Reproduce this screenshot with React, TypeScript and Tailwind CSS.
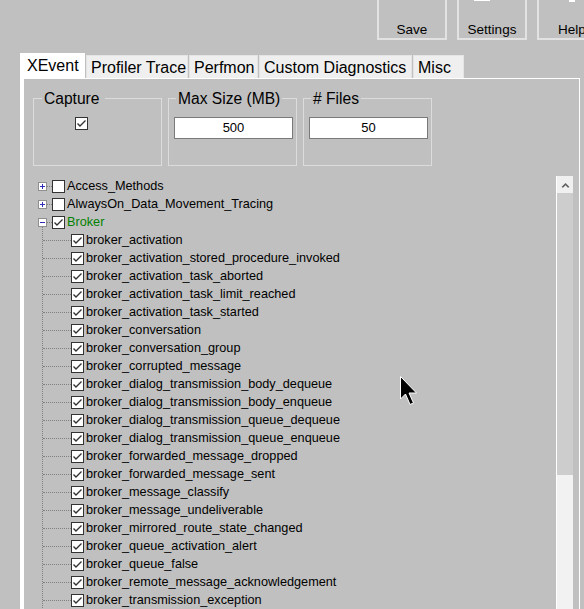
import React from 'react';

const children = [
  'broker_activation',
  'broker_activation_stored_procedure_invoked',
  'broker_activation_task_aborted',
  'broker_activation_task_limit_reached',
  'broker_activation_task_started',
  'broker_conversation',
  'broker_conversation_group',
  'broker_corrupted_message',
  'broker_dialog_transmission_body_dequeue',
  'broker_dialog_transmission_body_enqueue',
  'broker_dialog_transmission_queue_dequeue',
  'broker_dialog_transmission_queue_enqueue',
  'broker_forwarded_message_dropped',
  'broker_forwarded_message_sent',
  'broker_message_classify',
  'broker_message_undeliverable',
  'broker_mirrored_route_state_changed',
  'broker_queue_activation_alert',
  'broker_queue_false',
  'broker_remote_message_acknowledgement',
  'broker_transmission_exception',
];

const tabs = [
  { label: 'XEvent', w: 'w-[65px]' },
  { label: 'Profiler Trace', w: 'w-[102px]' },
  { label: 'Perfmon', w: 'w-[69px]' },
  { label: 'Custom Diagnostics', w: 'w-[153px]' },
  { label: 'Misc', w: 'w-[51px]' },
];

function CheckBox({ checked }: { checked: boolean }) {
  return (
    <div className="w-[13px] h-[13px] border border-[#333333] bg-white shrink-0">
      {checked && (
        <svg width="11" height="11" viewBox="0 0 11 11">
          <polyline points="1.5,5.5 4,8 9.5,2.5" fill="none" stroke="#333333" strokeWidth="1.4" />
        </svg>
      )}
    </div>
  );
}

function Expander({ open }: { open: boolean }) {
  return (
    <div className="w-[9px] h-[9px] border border-[#8f8f8f] bg-white shrink-0 relative">
      <svg width="7" height="7" viewBox="0 0 7 7" className="block">
        <line x1="1" y1="3.5" x2="6" y2="3.5" stroke="#2c2cb8" strokeWidth="1" />
        {!open && <line x1="3.5" y1="1" x2="3.5" y2="6" stroke="#2c2cb8" strokeWidth="1" />}
      </svg>
    </div>
  );
}

function TopRow({ label, open, checked, green }: { label: string; open: boolean; checked: boolean; green?: boolean }) {
  return (
    <div className="h-[18px] flex items-center">
      <Expander open={open} />
      <div className="w-[5px] border-t border-dotted border-[#808080]" />
      <CheckBox checked={checked} />
      <span className={`ml-[2px] whitespace-nowrap ${green ? 'text-[#008000]' : 'text-black'}`}>{label}</span>
    </div>
  );
}

export default function App() {
  return (
    <div className="w-[584px] h-[609px] bg-[#c0c0c0] overflow-hidden relative font-['Liberation_Sans',Arial,sans-serif] text-black">
      {/* toolbar buttons */}
      <div className="h-[40px] flex items-end gap-[10px] pl-[377px]">
        {['Save', 'Settings', 'Help'].map((b) => (
          <div
            key={b}
            className="relative w-[70px] h-[60px] shrink-0 border-2 border-[#e2e2e2] flex flex-col justify-end items-center text-[13.5px] leading-[16px]"
          >
            {b === 'Settings' && <div className="absolute top-[18px] left-[15px] w-[16px] h-[1px] bg-white" />}
            {b === 'Help' && <div className="absolute top-[18px] left-[30px] w-[6px] h-[2px] bg-white" />}
            <span>{b}</span>
          </div>
        ))}
      </div>

      {/* tabs */}
      <div className="mt-[13px] ml-[20px] h-[25px] flex items-end gap-[1px] text-[16px]">
        {tabs.map((t, i) => (
          <div
            key={t.label}
            className={`${t.w} flex items-center whitespace-nowrap ${
              i === 0 ? 'h-[25px] bg-white pl-[7px] pt-[1px]' : 'h-[23px] bg-[#efefef] border border-b-0 border-[#e4e4e4] pl-[4px] pt-[1px]'
            }`}
          >
            {t.label}
          </div>
        ))}
      </div>

      {/* tab page */}
      <div className="ml-[20px] w-[560px] h-[540px] border-t border-r border-l-4 border-white">
        <div className="pl-[9px] mt-[10px] flex gap-[6px] text-[15.6px]">
          <fieldset className="w-[129px] h-[77px] border border-[#dcdcdc]">
            <legend className="ml-[8px] px-[2px] pr-[6px] leading-[19px]">Capture</legend>
            <div className="ml-[41px] mt-[9px]">
              <CheckBox checked />
            </div>
          </fieldset>
          <fieldset className="w-[129px] h-[77px] border border-[#dcdcdc]">
            <legend className="ml-[7px] px-[2px] leading-[19px]">Max Size (MB)</legend>
            <div className="ml-[5px] mt-[9px] w-[119px] h-[22px] border border-[#7a7a7a] bg-white flex items-center justify-center text-[13px]">
              500
            </div>
          </fieldset>
          <fieldset className="w-[129px] h-[77px] border border-[#dcdcdc]">
            <legend className="ml-[7px] px-[2px] leading-[19px]">&#35; Files</legend>
            <div className="ml-[5px] mt-[9px] w-[119px] h-[22px] border border-[#7a7a7a] bg-white flex items-center justify-center text-[13px]">
              50
            </div>
          </fieldset>
        </div>

        {/* tree + scrollbar */}
        <div className="mt-[11px] flex text-[12.7px] leading-[18px]">
          <div className="flex-1 pl-[14px]">
            <TopRow label="Access_Methods" open={false} checked={false} />
            <TopRow label="AlwaysOn_Data_Movement_Tracing" open={false} checked={false} />
            <TopRow label="Broker" open checked green />
            <div className="ml-[4px] -mt-[5px] pt-[5px] border-l border-dotted border-[#808080] h-[500px]">
              {children.map((c) => (
                <div key={c} className="h-[18px] flex items-center">
                  <div className="w-[28px] border-t border-dotted border-[#808080]" />
                  <CheckBox checked />
                  <span className="ml-[2px] whitespace-nowrap">{c}</span>
                </div>
              ))}
            </div>
          </div>
          <div className="w-[17px] mr-[6px] -mt-[1px] h-[440px] flex flex-col border-l border-white">
            <div className="h-[17px] bg-[#f0f0f0] flex items-center justify-center">
              <svg width="9" height="6" viewBox="0 0 9 6">
                <path d="M0.5 5 L4.5 1 L8.5 5 L7 5.8 L4.5 3.3 L2 5.8 Z" fill="#606060" />
              </svg>
            </div>
            <div className="h-[282px] bg-[#cdcdcd]" />
            <div className="flex-1 bg-[#f2f2f2]" />
          </div>
        </div>
      </div>

      {/* mouse pointer */}
      <svg className="absolute left-[400px] top-[376px]" width="20" height="31" viewBox="0 0 20 31">
        <path
          d="M0.5 0.5 L0.5 23 L5.5 18 L10 28.5 L13.5 27 L9 17 L16.5 17 Z"
          fill="#000000"
          stroke="#ffffff"
          strokeWidth="1"
        />
      </svg>
    </div>
  );
}
